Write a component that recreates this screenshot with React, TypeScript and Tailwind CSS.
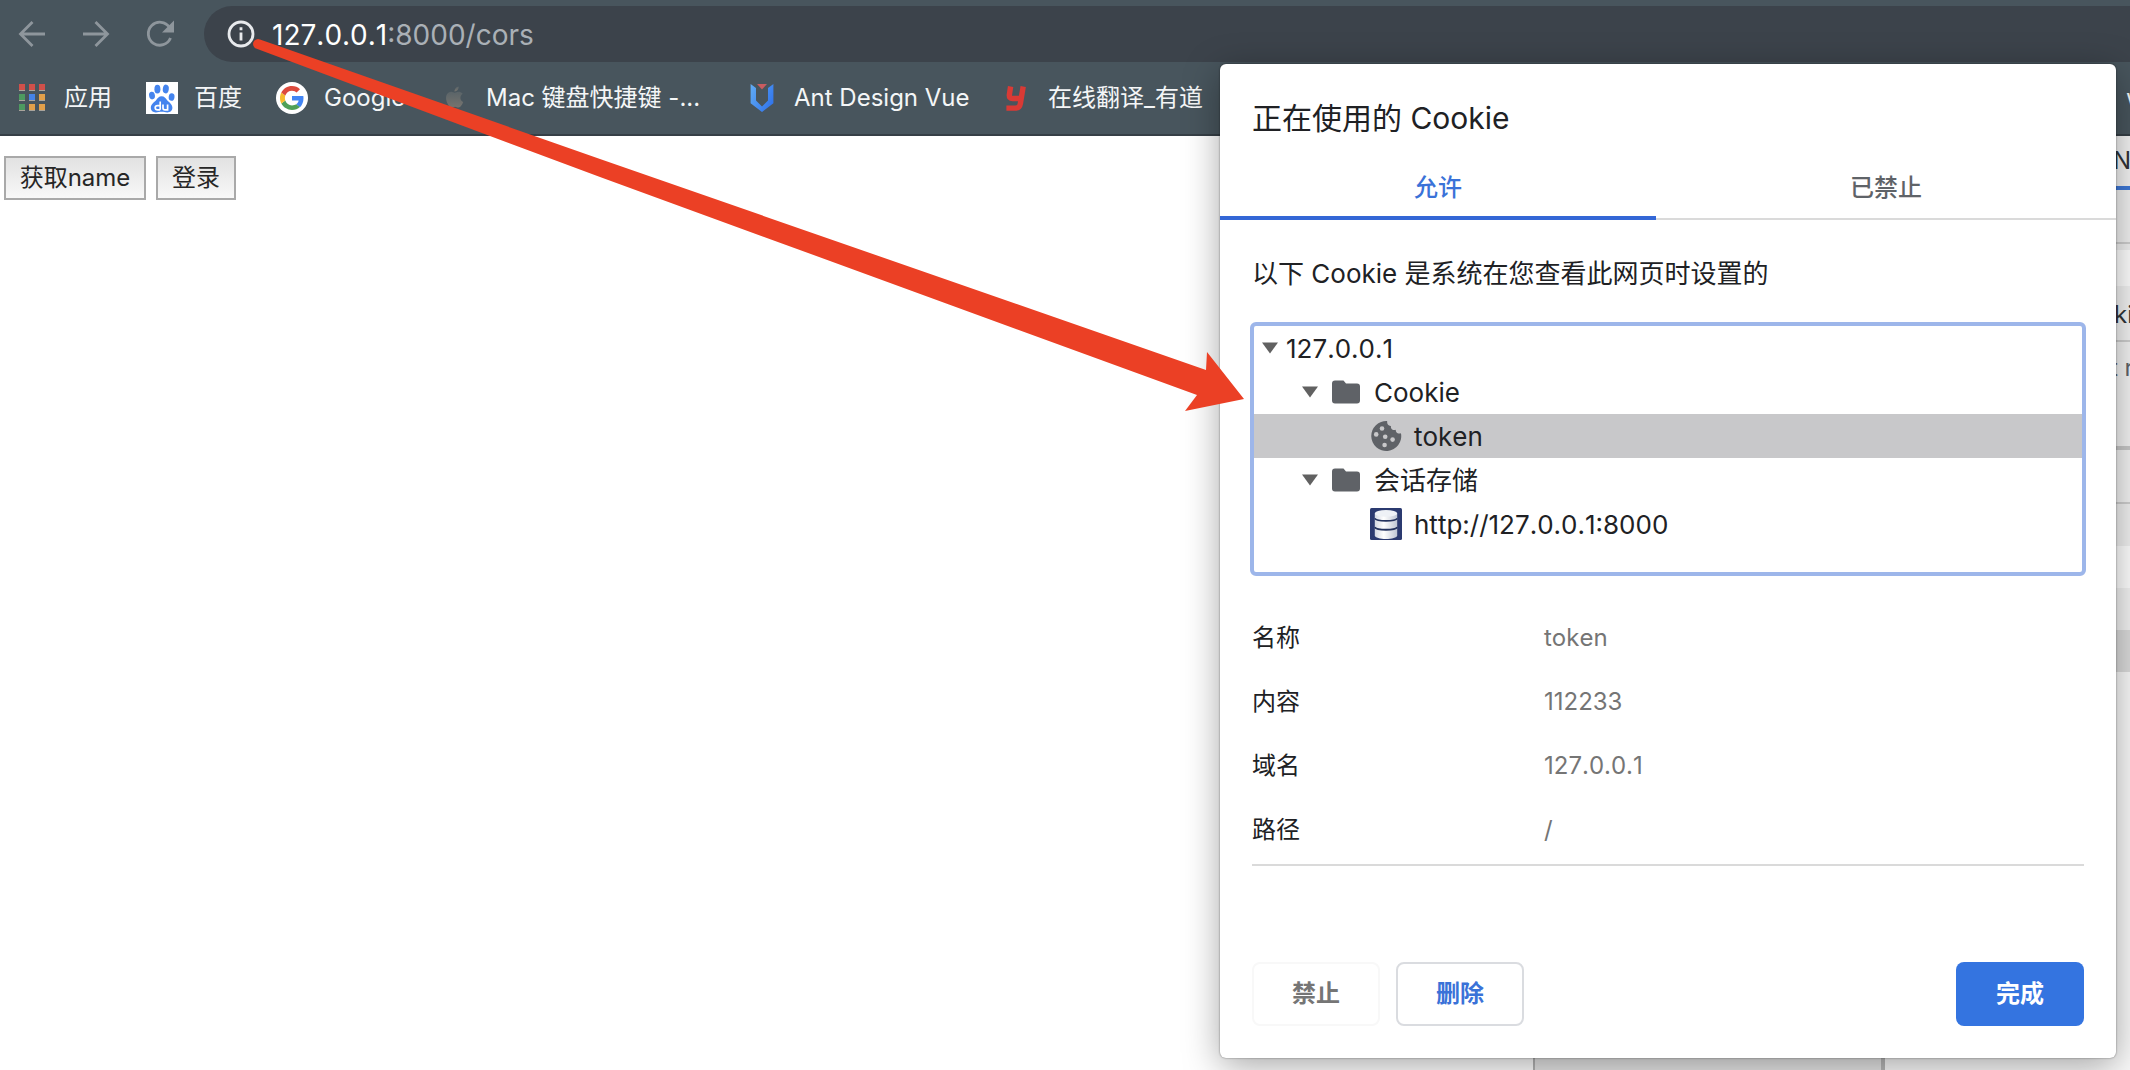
import type { ReactNode } from "react";

const BaiduIcon = () => (
  <svg viewBox="0 0 32 32" className="size-8">
    <rect width="32" height="32" fill="#fff" />
    <g fill="#4484ee">
      <ellipse cx="11.4" cy="7.2" rx="3" ry="4.4" />
      <ellipse cx="19.8" cy="7" rx="3" ry="4.4" transform="rotate(8 19.8 7)" />
      <ellipse cx="6" cy="13.6" rx="2.9" ry="3.8" transform="rotate(-10 6 13.6)" />
      <ellipse cx="25.6" cy="15" rx="2.9" ry="3.8" transform="rotate(8 25.6 15)" />
      <path d="M15.6 14.2c2.800 0 4 1.800 5.200 3.600 1.800 2.400 5.600 4.200 5.600 8 0 3.200-2.400 4.600-5 4.600-2.200 0-3.600-.6-5.800-.6s-3.600.6-5.800.6c-2.600 0-5-1.400-5-4.600 0-3.800 3.800-5.600 5.600-8 1.200-1.800 2.400-3.600 5.200-3.600z" />
    </g>
    <g fill="none" stroke="#fff" strokeWidth="1.7">
      <path d="M14.200 19.600v8.200M14.200 23.600h-2.600c-1.400 0-2.400.8-2.400 2.100s1 2.100 2.400 2.100h2.600" />
      <path d="M17 22.600v3.400c0 1.200.8 1.800 2 1.800h2.600v-5.200" />
    </g>
  </svg>
);

const GoogleIcon = () => (
  <svg viewBox="0 0 32 32" className="size-8">
    <circle cx="16" cy="16" r="16" fill="#fff" />
    <g transform="translate(4 4)">
      <path fill="#4285f4" d="M23.500 12.300c0-.9-.1-1.500-.2-2.200H12v4.300h6.600c-.1 1.100-.9 2.700-2.500 3.800l3.900 3c2.200-2.100 3.500-5.100 3.500-8.900z" />
      <path fill="#4fa057" d="M12 24c3.200 0 6-1.100 7.900-2.900l-3.800-2.900c-1 .7-2.400 1.200-4.100 1.200-3.100 0-5.800-2.100-6.700-4.900l-4 3.100C3.300 21.300 7.300 24 12 24z" />
      <path fill="#f6bb2d" d="M5.300 14.500c-.3-.8-.4-1.600-.4-2.500s.2-1.700.4-2.500l-4-3.100C.5 8.100 0 10 0 12s.5 3.900 1.300 5.600z" />
      <path fill="#dc4a3d" d="M12 4.700c2.200 0 3.700 1 4.600 1.800l3.400-3.300C17.900 1.200 15.200 0 12 0 7.300 0 3.300 2.700 1.300 6.500l4 3.100C6.200 6.700 8.900 4.700 12 4.700z" />
    </g>
  </svg>
);

const AppleIcon = () => (
  <svg viewBox="0 0 32 32" className="size-8">
    <defs>
      <linearGradient id="apple" x1="0" y1="0" x2="0" y2="1">
        <stop offset="0" stopColor="#5a6468" />
        <stop offset="1" stopColor="#76746f" />
      </linearGradient>
    </defs>
    <g transform="translate(4 2.500) scale(1.050)" fill="url(#apple)">
      <path d="M18.700 19.500c-.8 1.200-1.700 2.400-3 2.500-1.400 0-1.800-.8-3.300-.8-1.500 0-2 .8-3.300.8-1.300.1-2.300-1.300-3.100-2.500C4.300 17 2.900 12.400 4.700 9.400c.9-1.500 2.400-2.500 4.100-2.500 1.300 0 2.500.9 3.300.9.800 0 2.300-1.100 3.900-.9.700 0 2.500.3 3.700 2-.1.100-2.200 1.300-2.200 3.800 0 3 2.700 4 2.700 4-.1.100-.4 1.500-1.500 2.800" />
      <path d="M13 3.500c.7-.8 1.900-1.500 2.900-1.500.1 1.200-.3 2.300-1 3.200-.7.800-1.800 1.500-3 1.400-.1-1.200.5-2.400 1.100-3.100z" />
    </g>
  </svg>
);

const AntVueIcon = () => (
  <svg viewBox="0 0 32 32" className="size-8">
    <defs>
      <linearGradient id="antv" x1="0" y1="0" x2="1" y2="0.6">
        <stop offset="0" stopColor="#62adf5" />
        <stop offset="1" stopColor="#3377ec" />
      </linearGradient>
    </defs>
    <path d="M4.600 2l5.400 4v12.400l6 6 6-6V6l5.400-4v19.200L16 30 4.600 21.200z" fill="url(#antv)" />
    <path d="M11 2h10l-5 5.400z" fill="#c95c60" />
  </svg>
);

const YoudaoIcon = () => (
  <svg viewBox="0 0 32 32" className="size-8">
    <path
      d="M10.600 4.500L9.400 12.500c-.4 3 .6 4 3.200 4h7.800M23.200 4.500L20.400 21.500c-.6 3.400-2 4.600-5.200 4.600H6.400"
      fill="none"
      stroke="#d93a35"
      strokeWidth="5.400"
    />
  </svg>
);

const AppsIcon = () => (
  <svg viewBox="0 0 32 32" className="size-8">
    {["#d0504a", "#d0504a", "#d0504a", "#4d9a60", "#4583e6", "#e2a04a", "#4d9a60", "#e2a04a", "#e2a04a"].map((c, i) => (
      <g key={i}>
        <rect x={3 + (i % 3) * 10} y={2 + Math.floor(i / 3) * 10} width="6" height="7" fill="#a9a49c" />
        <rect x={3 + (i % 3) * 10} y={2 + Math.floor(i / 3) * 10} width="6" height="6" fill={c} />
      </g>
    ))}
  </svg>
);

const FolderIcon = () => (
  <svg viewBox="0 0 28 24" className="h-6 w-7">
    <path d="M3 0.500h8.500L14 3.500h11a3 3 0 0 1 3 3V20.500a3 3 0 0 1-3 3H3a3 3 0 0 1-3-3V3.500a3 3 0 0 1 3-3z" fill="#5f6267" />
  </svg>
);

const CookieIcon = () => (
  <svg viewBox="0 0 32 32" className="size-8">
    <path d="M17.200 1.100A15 15 0 1 0 31 13.300c-1.600.5-3.600.4-4.600-1-.6-.9-.7-1.700-.6-2.500-1.600.6-3.600.2-4.500-1.400-.5-.9-.5-1.600-.3-2.400-2.600.3-4.300-1.900-3.800-4.900z" fill="#5f6267" />
    <g fill="#c8c8ca">
      <circle cx="12" cy="8.500" r="2.300" />
      <circle cx="6.200" cy="14.400" r="2.300" />
      <circle cx="15.200" cy="16.800" r="2.300" />
      <circle cx="22.600" cy="19.600" r="2.300" />
      <circle cx="14.600" cy="25" r="2.300" />
    </g>
  </svg>
);

const DatabaseIcon = () => (
  <svg viewBox="0 0 32 32" className="size-8">
    <defs>
      <linearGradient id="db" x1="0" x2="1">
        <stop offset="0" stopColor="#d3d8e2" />
        <stop offset="0.4" stopColor="#ffffff" />
        <stop offset="1" stopColor="#bfc6d4" />
      </linearGradient>
    </defs>
    <rect width="32" height="32" rx="1.500" fill="#2b3a70" />
    <path d="M4.800 5.200v22c0 5 22.400 5 22.400 0v-22z" fill="url(#db)" />
    <ellipse cx="16" cy="5.400" rx="11.200" ry="3.400" fill="#eef1f6" />
    <path d="M4.800 10.400c2 3.400 20.400 3.400 22.400 0M4.800 19.200c2 3.400 20.400 3.400 22.400 0" fill="none" stroke="#25345f" strokeWidth="1.800" />
  </svg>
);

const bookmarks: { label: string; icon: ReactNode; width: string }[] = [
  { label: "应用", icon: <AppsIcon />, width: "w-[50px]" },
  { label: "百度", icon: <BaiduIcon />, width: "w-[50px]" },
  { label: "Google", icon: <GoogleIcon />, width: "w-[82px]" },
  { label: "Mac 键盘快捷键 -...", icon: <AppleIcon />, width: "w-[228px]" },
  { label: "Ant Design Vue", icon: <AntVueIcon />, width: "w-[174px]" },
  { label: "在线翻译_有道", icon: <YoudaoIcon />, width: "w-[174px]" },
];

const details = [
  ["名称", "token"],
  ["内容", "112233"],
  ["域名", "127.0.0.1"],
  ["路径", "/"],
];

function Toolbar() {
  return (
    <header className="border-b-2 border-[#363f46] bg-[#48555d]">
      <div className="flex items-center pt-1.5 pl-4">
        <div className="flex w-[188px] shrink-0 gap-8 text-[#8e969c]">
          <button aria-label="后退" className="size-8">
            <svg viewBox="0 0 32 32" className="size-8" fill="none" stroke="currentColor" strokeWidth="2.800">
              <path d="M29 16H5M16.500 4L4.500 16l12 12" />
            </svg>
          </button>
          <button aria-label="前进" className="size-8">
            <svg viewBox="0 0 32 32" className="size-8" fill="none" stroke="currentColor" strokeWidth="2.800">
              <path d="M3 16h24M15.500 4l12 12-12 12" />
            </svg>
          </button>
          <button aria-label="重新加载" className="size-8">
            <svg viewBox="0 0 32 32" className="size-8">
              <path d="M25.500 9.500A11.500 11.500 0 1 0 26.500 20" fill="none" stroke="currentColor" strokeWidth="2.800" />
              <path d="M30 2.500v12H18z" fill="currentColor" />
            </svg>
          </button>
        </div>
        <div className="flex h-14 flex-1 items-center gap-3.5 rounded-l-full bg-[#3c434b] pl-[22px]">
          <button aria-label="查看网站信息" className="size-8">
            <svg viewBox="0 0 32 32" className="size-8">
              <circle cx="15" cy="16" r="12" fill="none" stroke="#e8eaed" strokeWidth="2.800" />
              <path d="M15 14.500v8M15 9.200v3" stroke="#e8eaed" strokeWidth="2.800" />
            </svg>
          </button>
          <div className="pt-0.5 text-[28px] leading-8 text-[#aab0b6] [font-kerning:none]">
            <span className="text-white">127.0.0.1</span>:8000/cors
          </div>
        </div>
      </div>
      <nav className="flex h-[72px] items-center gap-8 pl-4 text-[24px] leading-8 text-[#f4f6f7]">
        {bookmarks.map((b) => (
          <a key={b.label} href="#" className="flex shrink-0 items-center gap-4">
            {b.icon}
            <span className={"whitespace-nowrap " + b.width}>{b.label}</span>
          </a>
        ))}
        <a href="#" className="ml-auto w-1 shrink-0 whitespace-nowrap">w</a>
      </nav>
    </header>
  );
}

function DevTools() {
  return (
    <aside className="flex w-[597px] shrink-0 flex-col border-l-2 border-[#b4b4b4] bg-[#f8f8f8] text-[24px] text-[#303338]">
      <div className="flex h-[54px] items-center justify-end border-b-4 border-[#3f79d8] bg-[#f3f3f3] leading-8">
        <span className="w-[17px]">N</span>
      </div>
      <div className="h-[54px] border-b-2 border-[#cfcfcf] bg-[#f1f1f1]" />
      <div className="h-[6px] bg-[#f1f1f1]" />
      <div className="h-9 bg-white" />
      <div className="flex h-14 items-center justify-end border-b-2 border-[#cfcfcf] bg-[#f3f3f3] pt-1 leading-8">
        <span className="w-4">ki</span>
      </div>
      <div className="flex h-[108px] items-start justify-end border-b-4 border-[#c8c8c8] bg-[#f3f3f3] pt-2.5 leading-8 text-[#5f6368]">
        <span className="w-5 whitespace-nowrap">t r</span>
      </div>
      <div className="h-[54px] border-b-2 border-[#cfcfcf] bg-[#f3f3f3]" />
      <div className="h-[42px] bg-[#f1f1f1]" />
      <div className="h-[42px] bg-white" />
      <div className="h-[42px] bg-[#f3f3f3]" />
      <div className="h-[42px] bg-[#dcdcdc]" />
      <div className="flex flex-1">
        <div className="w-[350px] border-r-4 border-[#b8b8b8] bg-[#e6e6e6]" />
        <div className="flex-1 bg-[#fafafa]" />
      </div>
    </aside>
  );
}

function TreeRow({ level, icon, open, selected, children }: { level: number; icon?: ReactNode; open?: boolean; selected?: boolean; children: ReactNode }) {
  const indent = ["pl-2", "pl-12", "pl-[116px]"][level];
  return (
    <li
      role="treeitem"
      aria-level={level + 1}
      aria-selected={!!selected}
      className={"flex h-11 items-center " + indent + (selected ? " bg-[#c8c8ca]" : "")}
    >
      {open && (
        <svg viewBox="0 0 16 12" className={"h-3 w-4 " + (icon ? "mr-[14px]" : "mr-2")}>
          <path d="M0 .5h16L8 11.500z" fill="#616161" />
        </svg>
      )}
      {icon}
      <span className={"pt-0.5 " + (icon ? (level === 1 ? "ml-[14px]" : "ml-3") : "")}>{children}</span>
    </li>
  );
}

function CookieDialog() {
  return (
    <section
      role="dialog"
      aria-label="正在使用的 Cookie"
      className="absolute top-16 right-3.5 w-[896px] rounded-md bg-white pb-8 text-[#202124] shadow-[0_0_2px_rgba(0,0,0,0.5),0_8px_36px_rgba(0,0,0,0.35)]"
    >
      <h1 className="px-8 pt-8 text-[30px] leading-[44px]">正在使用的 Cookie</h1>
      <div role="tablist" className="flex h-20 text-[24px] leading-8 font-medium">
        <button role="tab" aria-selected="true" className="flex-[436] border-b-4 border-[#3367d6] pt-5 text-[#3a72d8]">
          允许
        </button>
        <button role="tab" aria-selected="false" className="flex-[460] border-b-2 border-[#dadada] pt-[18px] text-[#5f6368]">
          已禁止
        </button>
      </div>
      <p className="px-8 pt-[34px] text-[26px] leading-10">以下 Cookie 是系统在您查看此网页时设置的</p>
      <ul role="tree" className="mx-[30px] mt-7 h-[254px] rounded-md border-4 border-[#9db6ea] text-[26px] leading-9 [font-kerning:none]">
        <TreeRow level={0} open>127.0.0.1</TreeRow>
        <TreeRow level={1} open icon={<FolderIcon />}>Cookie</TreeRow>
        <TreeRow level={2} selected icon={<CookieIcon />}>token</TreeRow>
        <TreeRow level={1} open icon={<FolderIcon />}>会话存储</TreeRow>
        <TreeRow level={2} icon={<DatabaseIcon />}>http://127.0.0.1:8000</TreeRow>
      </ul>
      <dl className="mx-8 mt-[30px] border-b-2 border-[#dadada] text-[24px] leading-8">
        {details.map(([name, value], i) => (
          <div key={name} className={"flex items-center " + (i === details.length - 1 ? "h-[66px] pb-0.5" : "h-16")}>
            <dt className="w-[292px]">{name}</dt>
            <dd className="text-[#757575] [font-kerning:none]">{value}</dd>
          </div>
        ))}
      </dl>
      <div className="mt-24 flex gap-4 px-8 text-[24px] leading-8 font-bold">
        <button disabled className="h-16 w-32 rounded-lg border-2 border-[#f8f8f8] text-[#757575]">禁止</button>
        <button className="h-16 w-32 rounded-lg border-2 border-[#dadce0] text-[#3a72d8]">删除</button>
        <button className="ml-auto h-16 w-32 rounded-lg bg-[#3474e0] text-white">完成</button>
      </div>
    </section>
  );
}

export default function App() {
  return (
    <div className="relative flex min-h-screen flex-col overflow-hidden bg-white font-['Inter','Noto_Sans_CJK_SC',sans-serif]">
      <Toolbar />
      <div className="flex flex-1">
        <main className="flex flex-1 items-start gap-2.5 px-1 pt-5 text-[24px] leading-8 text-[#262626]">
          <button className="h-11 w-[142px] border-2 border-[#a9a9a9] bg-linear-to-b from-[#e2e2e2] to-[#f8f8f8]">获取name</button>
          <button className="h-11 w-20 border-2 border-[#a9a9a9] bg-linear-to-b from-[#e2e2e2] to-[#f8f8f8]">登录</button>
        </main>
        <DevTools />
      </div>
      <CookieDialog />
      <svg viewBox="0 0 1260 420" className="pointer-events-none absolute top-0 left-0 h-[420px] w-[1260px]" aria-hidden="true">
        <path d="M260 39.500L600 159 1206 370 1207 352 1244 399 1185 411 1197 395 600 177 256 48.500a4.800 4.800 0 0 1 4-9z" fill="#eb4025" />
      </svg>
    </div>
  );
}
